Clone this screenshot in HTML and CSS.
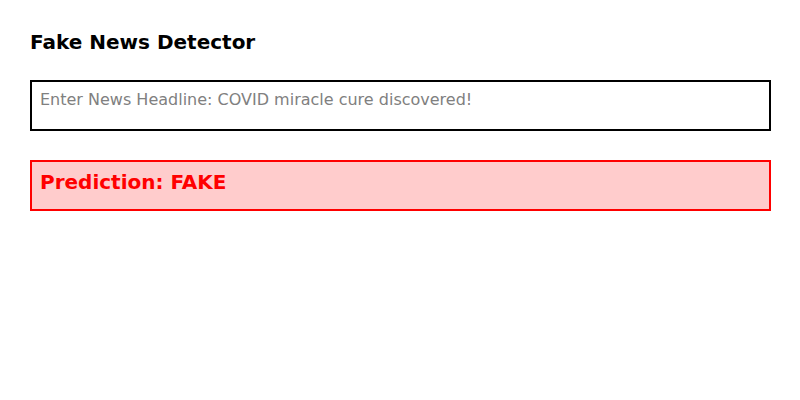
FILE: index.html
```html
<!DOCTYPE html>
<html>
<head>
<meta charset="utf-8">
<link rel="stylesheet" href="styles.css">
</head>
<body>
<div class="app">
  <h1 class="title">Fake News Detector</h1>
  <div class="input-box">Enter News Headline: COVID miracle cure discovered!</div>
  <div class="result fake">Prediction: FAKE</div>
</div>
</body>
</html>
```

FILE: styles.css
```css
html, body {
  margin: 0;
  padding: 0;
  background: #ffffff;
}
body {
  font-family: "DejaVu Sans", sans-serif;
}
.app {
  padding: 30px;
  display: flex;
  flex-direction: column;
  align-items: flex-start;
}
.title {
  margin: 0 0 26px 0;
  font-size: 20px;
  line-height: 24px;
  font-weight: bold;
  color: #000;
}
.input-box {
  box-sizing: border-box;
  width: 741px;
  height: 51px;
  border: 2px solid #000;
  padding: 8px;
  font-size: 16px;
  color: #808080;
  margin-bottom: 29px;
}
.result {
  box-sizing: border-box;
  width: 741px;
  height: 51px;
  padding: 8px;
  font-size: 20px;
  font-weight: bold;
}
.result.fake {
  border: 2px solid #ff0000;
  background: #ffcccc;
  color: #ff0000;
}
```
